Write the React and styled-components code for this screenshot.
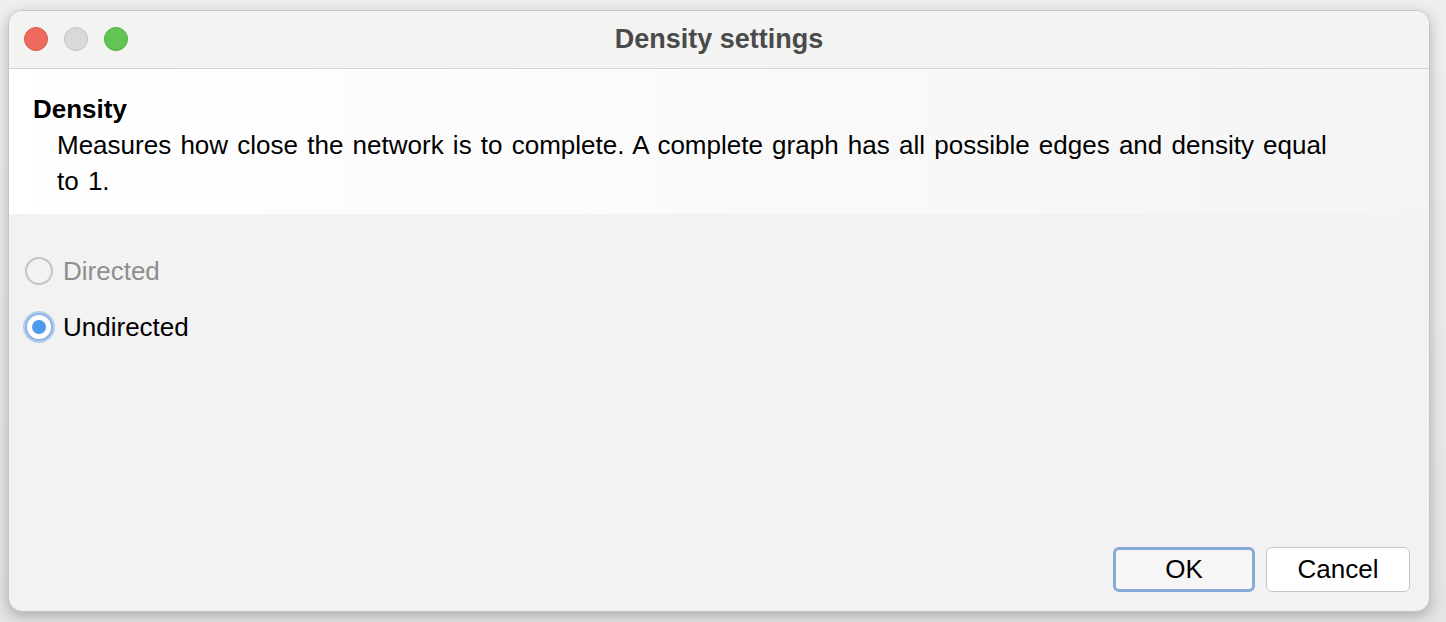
import React, { useState } from 'react';
import styled, { createGlobalStyle } from 'styled-components';

const Global = createGlobalStyle`
  html, body {
    margin: 0;
    padding: 0;
    height: 100%;
  }
  body {
    background: linear-gradient(180deg, #efefef 0%, #e4e4e4 100%);
    font-family: 'Liberation Sans', Arial, sans-serif;
    overflow: hidden;
  }
`;

const Stage = styled.div`
  padding: 10px 16px 10px 8px;
  height: 622px;
  box-sizing: border-box;
`;

const Window = styled.div`
  width: 1422px;
  height: 602px;
  box-sizing: border-box;
  display: flex;
  flex-direction: column;
  background: #f2f2f2;
  border: 1px solid #c4c4c4;
  border-radius: 14px;
  overflow: hidden;
  box-shadow: 0 4px 14px rgba(0, 0, 0, 0.25);
`;

const TitleBar = styled.div`
  position: relative;
  height: 57px;
  flex-shrink: 0;
  display: flex;
  align-items: center;
  justify-content: center;
  background: #f3f3f2;
  border-bottom: 1px solid #d3d3d3;
`;

const Lights = styled.div`
  position: absolute;
  left: 15px;
  top: 16px;
  display: flex;
  gap: 16px;
`;

const Light = styled.span`
  width: 24px;
  height: 24px;
  border-radius: 50%;
  box-sizing: border-box;
  background: ${p => p.color};
  border: 1px solid ${p => p.edge};
`;

const Title = styled.div`
  font-size: 27px;
  font-weight: 700;
  color: #4a4a4a;
`;

const Header = styled.div`
  padding: 22px 24px 15px 24px;
  background: linear-gradient(90deg, #ffffff 0%, #fbfbfb 40%, #f4f4f4 100%);
  color: #000;
  font-size: 26px;
  line-height: 36px;
`;

const HeaderTitle = styled.div`
  font-weight: 700;
`;

const Description = styled.div`
  padding-left: 24px;
  width: 1290px;
  word-spacing: 2px;
`;

const Options = styled.div`
  display: flex;
  flex-direction: column;
  gap: 20px;
  padding: 39px 0 0 16px;
`;

const OptionRow = styled.label`
  display: flex;
  align-items: center;
  gap: 10px;
  height: 36px;
  font-size: 26px;
  color: ${p => (p.disabled ? '#8e8e8e' : '#000')};
`;

const RadioCircle = styled.span`
  position: relative;
  width: 28px;
  height: 28px;
  border-radius: 50%;
  box-sizing: border-box;
  border: 2px solid ${p => (p.checked ? '#8eb6e0' : '#c4c4c4')};
  background: ${p => (p.checked ? '#ffffff' : 'transparent')};
  box-shadow: ${p => (p.checked ? '0 0 0 2px #b3cfee' : 'none')};
  display: flex;
  align-items: center;
  justify-content: center;
`;

const Dot = styled.span`
  width: 14px;
  height: 14px;
  border-radius: 50%;
  background: #4c9aea;
`;

const Spacer = styled.div`
  flex: 1;
`;

const Footer = styled.div`
  display: flex;
  justify-content: flex-end;
  gap: 11px;
  padding: 0 19px 19px 0;
`;

const Button = styled.button`
  width: ${p => p.w}px;
  height: 45px;
  box-sizing: border-box;
  border-radius: 6px;
  font-family: 'Liberation Sans', Arial, sans-serif;
  font-size: 26px;
  color: #000;
  background: ${p => (p.primary ? '#f6f6f6' : '#ffffff')};
  border: ${p => (p.primary ? '3px solid #86abd8' : '1.5px solid #c6c6c6')};
  padding: 0;
`;

export default function App() {
  const [value, setValue] = useState('undirected');
  return (
    <>
      <Global />
      <Stage>
        <Window>
          <TitleBar>
            <Lights>
              <Light color="#ee6a5e" edge="#d5564b" />
              <Light color="#d9d9d7" edge="#c2c2c0" />
              <Light color="#61c454" edge="#4fae43" />
            </Lights>
            <Title>Density settings</Title>
          </TitleBar>
          <Header>
            <HeaderTitle>Density</HeaderTitle>
            <Description>
              Measures how close the network is to complete. A complete graph has all possible edges and density equal to 1.
            </Description>
          </Header>
          <Options>
            <OptionRow disabled>
              <RadioCircle checked={false} />
              Directed
            </OptionRow>
            <OptionRow onClick={() => setValue('undirected')}>
              <RadioCircle checked={value === 'undirected'}>
                {value === 'undirected' && <Dot />}
              </RadioCircle>
              Undirected
            </OptionRow>
          </Options>
          <Spacer />
          <Footer>
            <Button primary w={142}>OK</Button>
            <Button w={144}>Cancel</Button>
          </Footer>
        </Window>
      </Stage>
    </>
  );
}
